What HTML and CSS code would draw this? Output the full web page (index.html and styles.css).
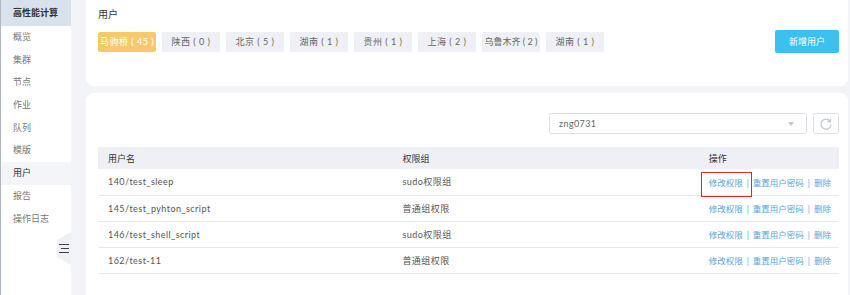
FILE: index.html
```html
<!DOCTYPE html>
<html lang="zh-CN">
<head>
  <meta charset="UTF-8" />
  <title>用户 - 高性能计算</title>
  <link rel="stylesheet" href="styles.css">
</head>
<body>
  <aside class="sidebar">
    <div class="sidebar-title">高性能计算</div>
    <ul class="nav">
      <li>概览</li>
      <li>集群</li>
      <li>节点</li>
      <li>作业</li>
      <li>队列</li>
      <li>模版</li>
      <li class="active">用户</li>
      <li>报告</li>
      <li>操作日志</li>
    </ul>
    <div class="collapse-btn">
      <span></span><span class="mid"></span><span></span>
    </div>
  </aside>

  <main class="main">
    <section class="card card-top">
      <div class="card-title">用户</div>
      <div class="tag-row">
        <div class="tags">
          <span class="tag current">马驹桥 ( 45 )</span>
          <span class="tag">陕西 ( 0 )</span>
          <span class="tag">北京 ( 5 )</span>
          <span class="tag">湖南 ( 1 )</span>
          <span class="tag">贵州 ( 1 )</span>
          <span class="tag">上海 ( 2 )</span>
          <span class="tag tight">乌鲁木齐 ( 2 )</span>
          <span class="tag">湖南 ( 1 )</span>
        </div>
        <button class="btn-primary">新增用户</button>
      </div>
    </section>

    <section class="card card-list">
      <div class="toolbar">
        <div class="select">
          <span>zng0731</span>
          <i class="caret"></i>
        </div>
        <button class="btn-refresh">
          <svg width="14" height="14" viewBox="0 0 14 14">
            <path d="M11 4.2 A5 5 0 1 0 12 7.5" fill="none" stroke="#c5cbd4" stroke-width="1.3"/>
            <path d="M11.6 1.6 L11.4 4.8 L8.3 4.4" fill="none" stroke="#c5cbd4" stroke-width="1.3"/>
          </svg>
        </button>
      </div>

      <table class="user-table">
        <thead>
          <tr><th class="col-name">用户名</th><th class="col-group">权限组</th><th>操作</th></tr>
        </thead>
        <tbody>
          <tr>
            <td>140/test_sleep</td><td>sudo权限组</td>
            <td class="ops"><a class="marked">修改权限</a><span class="sep">|</span><a>重置用户密码</a><span class="sep">|</span><a>删除</a></td>
          </tr>
          <tr>
            <td>145/test_pyhton_script</td><td>普通组权限</td>
            <td class="ops"><a>修改权限</a><span class="sep">|</span><a>重置用户密码</a><span class="sep">|</span><a>删除</a></td>
          </tr>
          <tr>
            <td>146/test_shell_script</td><td>sudo权限组</td>
            <td class="ops"><a>修改权限</a><span class="sep">|</span><a>重置用户密码</a><span class="sep">|</span><a>删除</a></td>
          </tr>
          <tr>
            <td>162/test-11</td><td>普通组权限</td>
            <td class="ops"><a>修改权限</a><span class="sep">|</span><a>重置用户密码</a><span class="sep">|</span><a>删除</a></td>
          </tr>
        </tbody>
      </table>
    </section>
  </main>
</body>
</html>
```

FILE: styles.css
```css
* {
  box-sizing: border-box;
}

body {
  margin: 0;
  width: 850px;
  height: 295px;
  overflow: hidden;
  display: flex;
  font-family: "Lato", "Noto Sans CJK SC", sans-serif;
  font-size: 9px;
  color: #555;
  background: #f3f4f8;
}

/* sidebar */
.sidebar {
  position: relative;
  width: 71px;
  height: 295px;
  background: #fff;
  border-left: 1px solid #b0b6be;
  flex-shrink: 0;
}

.sidebar-title {
  height: 26px;
  line-height: 26px;
  padding-left: 12px;
  background: #d9e1ec;
  color: #333;
  font-weight: 600;
}

.nav {
  list-style: none;
  margin: 0;
  padding: 0;
}

.nav li {
  height: 22.7px;
  line-height: 22.7px;
  padding-left: 12px;
  color: #777;
}

.nav li.active {
  background: #f4f5f9;
  color: #333;
}

.collapse-btn {
  position: absolute;
  right: 0;
  top: 232px;
  width: 14px;
  height: 33px;
  background: #eef0f5;
  clip-path: polygon(0 24%, 100% 0, 100% 100%, 0 76%);
  display: flex;
  flex-direction: column;
  justify-content: center;
  gap: 2.5px;
  padding-left: 2px;
}

.collapse-btn span {
  display: block;
  width: 10px;
  height: 1.5px;
  background: #3a4250;
}

.collapse-btn span.mid {
  width: 8px;
  margin-left: 2px;
}

/* main */
.main {
  flex: 1;
  padding: 0 2px 0 15px;
  display: flex;
  flex-direction: column;
  gap: 7px;
}

.card {
  background: #fff;
}

.card-top {
  height: 86px;
  padding: 7px 9px 0 12px;
  clip-path: polygon(0 0, 100% 0, 100% calc(100% - 5px), calc(100% - 5px) 100%, 5px 100%, 0 calc(100% - 5px));
}

.card-title {
  font-size: 10px;
  line-height: 14px;
  color: #333;
}

.tag-row {
  display: flex;
  align-items: center;
  margin-top: 9px;
}

.tags {
  display: flex;
  gap: 6px;
}

.tag {
  width: 58px;
  height: 20px;
  line-height: 20px;
  text-align: center;
  background: #eff0f5;
  border-radius: 2px;
  color: #666;
  white-space: nowrap;
  letter-spacing: 0.5px;
}

.tag.tight {
  letter-spacing: 0;
}

.tag.current {
  background: #f8c96c;
  color: #fff;
}

.btn-primary {
  margin-left: auto;
  width: 64px;
  height: 23px;
  border: none;
  border-radius: 2px;
  background: #3cc0f0;
  color: #fff;
  font-family: inherit;
  font-size: 9px;
}

.card-list {
  flex: 1;
  padding: 20px 9px 0 12px;
  clip-path: polygon(5px 0, calc(100% - 5px) 0, 100% 5px, 100% 100%, 0 100%, 0 5px);
}

.toolbar {
  display: flex;
  justify-content: flex-end;
  gap: 6px;
}

.select {
  width: 258px;
  height: 21px;
  border: 1px solid #dde2ea;
  border-radius: 2px;
  display: flex;
  align-items: center;
  justify-content: space-between;
  padding: 0 12px 0 9px;
  color: #666;
  letter-spacing: 0.4px;
}

.caret {
  width: 0;
  height: 0;
  border-left: 3.5px solid transparent;
  border-right: 3.5px solid transparent;
  border-top: 4px solid #c3c8d0;
}

.btn-refresh {
  width: 26px;
  height: 21px;
  border: 1px solid #dde2ea;
  border-radius: 2px;
  background: #fff;
  padding: 0;
  display: flex;
  align-items: center;
  justify-content: center;
}

/* table */
.user-table {
  width: 100%;
  margin-top: 13px;
  border-collapse: collapse;
}

.user-table th,
.user-table td {
  padding: 0 0 0 10px;
  text-align: left;
  font-weight: normal;
  white-space: nowrap;
}

.user-table th {
  height: 22px;
  background: #eef0f5;
  color: #333;
}

.col-name {
  width: 295px;
}

.col-group {
  width: 307px;
}

.user-table td {
  height: 26px;
  border-bottom: 1.5px solid #e6e9f1;
  letter-spacing: 0.45px;
}

.user-table td.ops {
  text-align: right;
  padding-right: 8px;
  font-size: 8.5px;
  color: #5ba7dc;
  letter-spacing: 0;
}

.ops .sep {
  margin: 0 4px;
}

.ops a {
  position: relative;
  color: #5ba7dc;
}

.ops a.marked::after {
  content: "";
  position: absolute;
  left: -8px;
  right: -9px;
  top: -6px;
  bottom: -9px;
  border: 1.5px solid #e0262a;
}
```
